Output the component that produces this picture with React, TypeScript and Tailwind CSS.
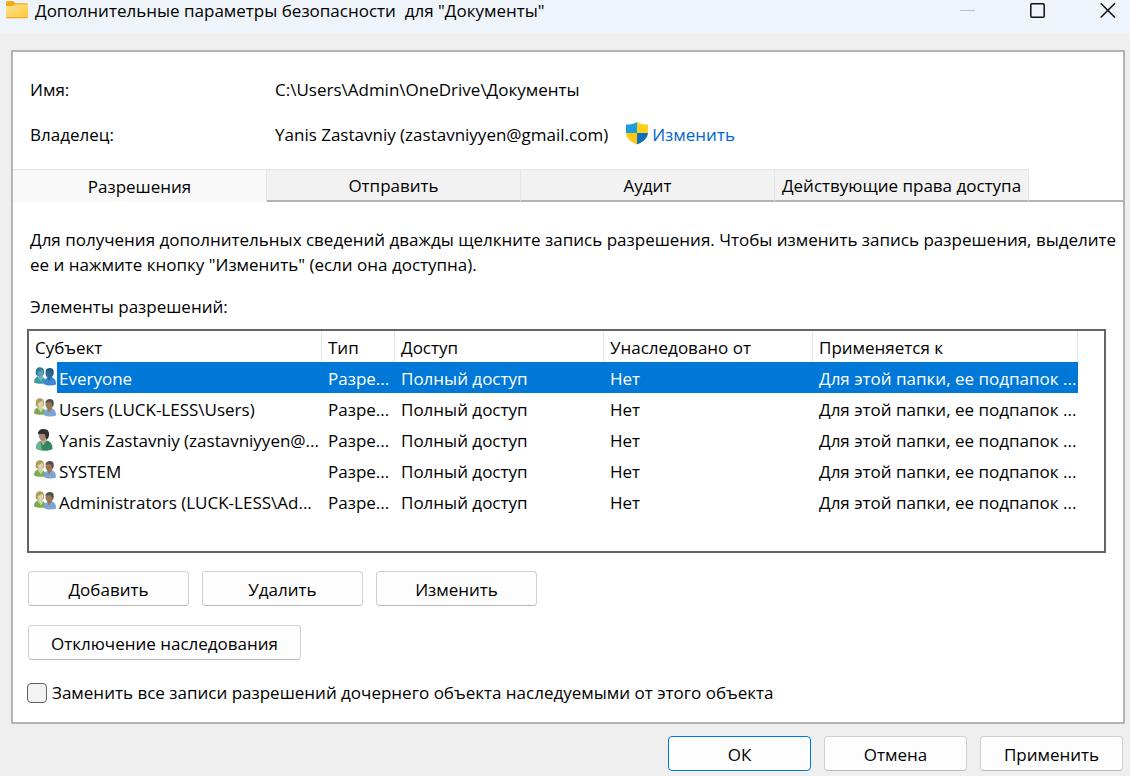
import { useState } from "react";

const tabs = ["Разрешения", "Отправить", "Аудит", "Действующие права доступа"];

const columns = ["Субъект", "Тип", "Доступ", "Унаследовано от", "Применяется к"];

const entries = [
  { name: "Everyone", kind: "group" },
  { name: "Users (LUCK-LESS\\Users)", kind: "group" },
  { name: "Yanis Zastavniy (zastavniyyen@...", kind: "user" },
  { name: "SYSTEM", kind: "group" },
  { name: "Administrators (LUCK-LESS\\Ad...", kind: "group" },
];

const FolderIcon = () => (
  <svg width="22" height="19" viewBox="0 -1 22 19" className="shrink-0" aria-hidden="true">
    <defs>
      <linearGradient id="folder" x1="0" y1="0" x2="1" y2="1">
        <stop offset="0" stopColor="#ffe393" />
        <stop offset="1" stopColor="#fdc736" />
      </linearGradient>
    </defs>
    <path d="M0 1.5Q0 0 1.5 0H6.5Q7.5 0 8.2 1L9.2 2.2H20.5Q22 2.2 22 3.5V8H0Z" fill="#f0ac1c" />
    <path d="M0 5H6.5Q7.5 5 8.2 4.2L9 3.4H22V16.2Q22 17 21 17H1Q0 17 0 16.2Z" fill="url(#folder)" />
    <path d="M0 16.2H22Q22 17.3 21 17.3H1Q0 17.3 0 16.2Z" fill="#e5a218" />
  </svg>
);

const ShieldIcon = () => (
  <svg width="22" height="25" viewBox="0 0 22 25" className="shrink-0" aria-hidden="true">
    <defs>
      <clipPath id="shield">
        <path d="M11 0C8.2 2.2 4.5 2.6 0 2.6V10C0 16 4.5 20 11 22.4C17.5 20 22 16 22 10V2.6C17.5 2.6 13.8 2.2 11 0Z" />
      </clipPath>
    </defs>
    <g clipPath="url(#shield)">
      <rect width="11" height="11" fill="#1b9de2" />
      <rect x="11" width="11" height="11" fill="#ffcf1d" />
      <rect y="11" width="11" height="12" fill="#fdc60f" />
      <rect x="11" y="11" width="11" height="12" fill="#0c6fc0" />
    </g>
  </svg>
);

const GroupIcon = ({ selected }: { selected: boolean }) => {
  const c = selected
    ? { hairA: "#2f8098", faceA: "#5f9dc0", bodyA: "#3d9aa0", bodyA2: "#6fb6cc", hairB: "#1d5a7c", faceB: "#2a6ca0", bodyB: "#3a88d4" }
    : { hairA: "#a79f5c", faceA: "#e6cfab", bodyA: "#7da854", bodyA2: "#c3d9a4", hairB: "#55504a", faceB: "#9a7454", bodyB: "#7ea5d2" };
  return (
    <svg width="22" height="19" viewBox="0 0 22 19" className="shrink-0" aria-hidden="true">
      <path d="M0 15.5C0 11.6 1.6 9.8 4.6 9.2C9 9.4 11.8 11.5 11.8 16C8 17.4 3 17 0 15.5Z" fill={c.bodyA} />
      <path d="M3.2 9.6L7 14.6L9.4 10.6L8 8H4.2Z" fill={c.bodyA2} />
      <path d="M1.8 7.6C1.2 2.6 2.6 0.2 6 0.2C9.6 0.2 10.6 3 9.8 7.6C8.4 9.8 3.6 10 1.8 7.6Z" fill={c.hairA} />
      <path d="M3.8 5C5.8 4.8 7.4 3.8 8 2.6C9.8 4 9.6 8.8 6.8 9.8C4.6 9.2 3.6 7.4 3.8 5Z" fill={c.faceA} />
      <path d="M10 17.2C10 12.6 12 10.4 16 10C20 10.2 22 12.6 22 17.6C18.5 19 13 18.8 10 17.2Z" fill={c.bodyB} />
      <path d="M13.4 10.3L14.8 14.4L18 10.4L17.4 8H13.6Z" fill={c.faceB} />
      <ellipse cx="15.4" cy="6.4" rx="3.9" ry="4.6" fill={c.faceB} />
      <path d="M11.4 5C11.6 2 13.4 1 16 1C19.4 1.2 20.4 3.6 19.4 7.6L18.2 8.8C18.2 6.4 17.6 5 16.6 4.2C14.4 4.4 13 4 11.4 5Z" fill={c.hairB} />
    </svg>
  );
};

const UserIcon = () => (
  <svg width="22" height="22" viewBox="0 0 22 22" className="shrink-0" aria-hidden="true">
    <path d="M2.2 19.8C1.8 14.5 4.5 11.8 9.5 11.2C15.5 11 18.6 14 18.6 20C15 22.4 6.5 22.4 2.2 19.8Z" fill="#31885e" />
    <path d="M2.2 19.8C1.8 15.5 3.4 13 6.4 12L8 21C6 21 4 20.8 2.2 19.8Z" fill="#6fb390" />
    <path d="M7.2 9.5L12 10L11.8 12.4L9 16.4L6.8 12.4Z" fill="#c9a996" />
    <path d="M4.8 5C5.4 3 12 3 12.4 6C12.4 9 11 11.8 8.6 11.8C5.8 11.4 4.6 8.4 4.8 5Z" fill="#a98672" />
    <path d="M4 5.4C3.8 2 6 0 9.6 0C14.4 0.2 15.8 3.4 14.8 7.4C14.2 9.4 13.2 10.4 12 10.8C12 8 11.2 6 10.2 4.8C8.4 5.4 6 4.6 4 5.4Z" fill="#322f2f" />
  </svg>
);

const baseButton =
  "h-[35px] rounded border border-[#d0d0d0] border-b-[#bababa] bg-[#fdfdfd] pt-0.5 text-center";

const App = () => {
  const [activeTab, setActiveTab] = useState(0);
  const [selected, setSelected] = useState(0);
  const [replaceAll, setReplaceAll] = useState(false);

  return (
    <div className="flex min-h-screen flex-col bg-[#efefef] font-['Open_Sans','Noto_Sans',sans-serif] text-[17px] leading-[25px] text-black">
      <header className="flex h-[33px] items-start bg-[#eef4f9] pl-1.5">
        <FolderIcon />
        <h1 className="ml-[7px] grow leading-[21px] whitespace-pre">Дополнительные параметры безопасности  для "Документы"</h1>
        <div className="flex h-5 items-center gap-[54px] pr-3.5">
          <button type="button" aria-label="Свернуть" disabled>
            <svg width="16" height="16" viewBox="0 0 16 16">
              <path d="M0 8.5H15" stroke="#bcc1c5" />
            </svg>
          </button>
          <button type="button" aria-label="Развернуть">
            <svg width="16" height="16" viewBox="0 0 16 16" fill="none">
              <rect x="0.8" y="1.8" width="13.4" height="13.4" rx="1.2" stroke="#111" strokeWidth="1.5" />
            </svg>
          </button>
          <button type="button" aria-label="Закрыть">
            <svg width="16" height="16" viewBox="0 0 16 16">
              <path d="M0.7 1.2L15 15.5M15 1.2L0.7 15.5" stroke="#111" strokeWidth="1.5" />
            </svg>
          </button>
        </div>
      </header>

      <main className="mt-[17px] mr-[5px] ml-[11px] border-2 border-[#b4b4b4] bg-white pb-[17px]">
        <dl className="grid grid-cols-[245px_1fr] gap-y-5 px-[17px] pt-[25px]">
          <dt>Имя:</dt>
          <dd>C:\Users\Admin\OneDrive\Документы</dd>
          <dt>Владелец:</dt>
          <dd className="flex items-center">
            Yanis Zastavniy (zastavniyyen@gmail.com)
            <a href="#owner" className="ml-[18px] flex items-center gap-1 text-[#0066cc]">
              <ShieldIcon />
              Изменить
            </a>
          </dd>
        </dl>

        <div role="tablist" className="mt-[22px] flex">
          {tabs.map((tab, i) => (
            <button
              key={tab}
              type="button"
              role="tab"
              aria-selected={i === activeTab}
              onClick={() => setActiveTab(i)}
              className={
                i === activeTab
                  ? "h-[33px] w-[254px] border-t border-r border-[#e5e5e5] bg-[#f9f9f9] whitespace-nowrap"
                  : "h-[33px] w-[254px] border-t border-r border-b-2 border-[#e5e5e5] border-b-[#b4b4b4] bg-[#f2f2f2] whitespace-nowrap"
              }
            >
              {tab}
            </button>
          ))}
          <div className="grow border-b-2 border-[#b4b4b4]" />
        </div>

        <section className="pl-[14px]">
          <p className="mt-[25px] pl-[3px]">
            Для получения дополнительных сведений дважды щелкните запись разрешения. Чтобы изменить запись разрешения, выделите ее и нажмите кнопку "Изменить" (если она доступна).
          </p>
          <p className="mt-[17px] pl-[3px]">Элементы разрешений:</p>

          <div className="mt-2.5 mr-[17px] min-h-[224px] border-2 border-[#646464] pr-[26px]">
            <table className="w-full table-fixed border-collapse text-left whitespace-nowrap">
              <colgroup>
                <col className="w-[293px]" />
                <col className="w-[73px]" />
                <col className="w-[209px]" />
                <col className="w-[209px]" />
                <col />
              </colgroup>
              <thead>
                <tr className="h-[31px]">
                  {columns.map((column) => (
                    <th key={column} className="p-0 font-normal">
                      <div className="flex h-[31px] items-center border-r border-[#e5e5e5] pt-0.5 pl-1.5">{column}</div>
                    </th>
                  ))}
                </tr>
              </thead>
              <tbody>
                {entries.map((entry, i) => (
                  <tr
                    key={entry.name}
                    onClick={() => setSelected(i)}
                    className={i === selected ? "h-[31px] text-white" : "h-[31px]"}
                  >
                    <td className="p-0">
                      <div className="flex h-[31px] pl-[5px]">
                        <div className="w-[23px] shrink-0 pt-[5px]">
                          {entry.kind === "user" ? <UserIcon /> : <GroupIcon selected={i === selected} />}
                        </div>
                        <div className={i === selected ? "flex grow items-center bg-[#0078d7] pt-0.5 pl-0.5" : "flex grow items-center pt-0.5 pl-0.5"}>
                          {entry.name}
                        </div>
                      </div>
                    </td>
                    {["Разре...", "Полный доступ", "Нет", "Для этой папки, ее подпапок ..."].map((text) => (
                      <td key={text} className={i === selected ? "bg-[#0078d7] p-0 pt-0.5 pl-1.5" : "p-0 pt-0.5 pl-1.5"}>
                        {text}
                      </td>
                    ))}
                  </tr>
                ))}
              </tbody>
            </table>
          </div>

          <div className="mt-[18px] flex gap-[13px] pl-px">
            <button type="button" className={`${baseButton} w-[161px]`}>Добавить</button>
            <button type="button" className={`${baseButton} w-[161px]`}>Удалить</button>
            <button type="button" className={`${baseButton} w-[161px]`}>Изменить</button>
          </div>
          <div className="mt-[19px] pl-px">
            <button type="button" className={`${baseButton} w-[273px]`}>Отключение наследования</button>
          </div>

          <label className="mt-5 flex items-center gap-[5px]">
            <input
              type="checkbox"
              checked={replaceAll}
              onChange={(e) => setReplaceAll(e.target.checked)}
              className="size-5 appearance-none rounded border border-[#5f5f5f] bg-[#f3f3f3] checked:bg-[#0078d7]"
            />
            Заменить все записи разрешений дочернего объекта наследуемыми от этого объекта
          </label>
        </section>
      </main>

      <footer className="mt-3 flex justify-end gap-[13px] pr-[7px] pb-[5px]">
        <button type="button" className="h-[35px] w-[143px] rounded border border-[#0078d4] bg-[#fdfdfd] pt-0.5 text-center">ОК</button>
        <button type="button" className={`${baseButton} w-[143px]`}>Отмена</button>
        <button type="button" className={`${baseButton} w-[143px]`}>Применить</button>
      </footer>
    </div>
  );
};

export default App;
